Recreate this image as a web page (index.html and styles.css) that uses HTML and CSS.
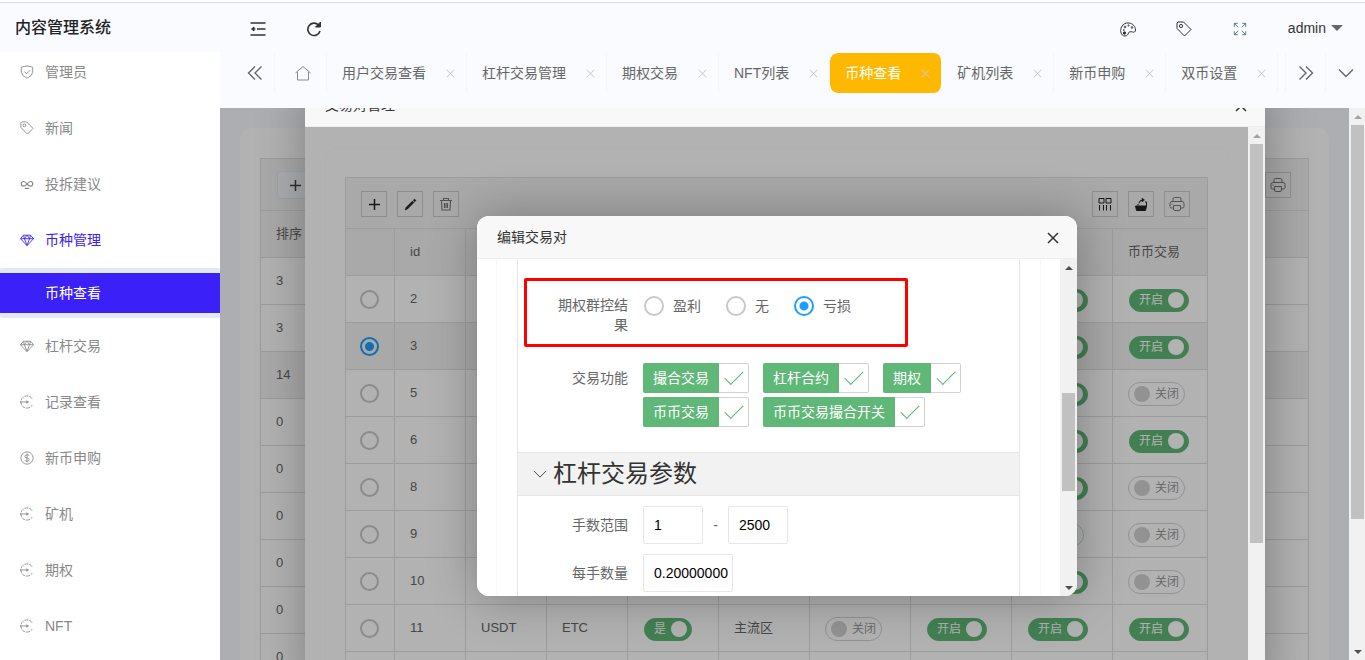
FILE: index.html
```html
<!DOCTYPE html>
<html lang="zh-CN">
<head>
<meta charset="utf-8">
<title>内容管理系统</title>
<link rel="stylesheet" href="styles.css">
</head>
<body>
<svg class="sprite" aria-hidden="true">
  <symbol id="i-gem" viewBox="0 0 16 16"><path d="M4 2.500h8l3.500 4L8 14.500.500 6.500zM.500 6.500h15M5 6.500 8 14l3-7.500M4 2.500l1 4 3-4 3 4 1-4"/></symbol>
  <symbol id="i-go" viewBox="0 0 16 16"><path d="M14 4.500A7 7 0 1 0 14 11.500" stroke-dasharray="4.500 1"/><path d="M0 8h8"/><path d="M7.500 6.500L10 8 7.500 9.500z" fill="currentColor" stroke-width=".5"/></symbol>
  <symbol id="i-tag" viewBox="0 0 16 16"><path d="M1 2l1-1h5.500l7.500 7.500-6.500 6.500L1 7.500z"/><circle cx="5" cy="5" r="1.600"/></symbol>
  <symbol id="i-plus" viewBox="0 0 16 16"><path d="M8.500 3v11M3 8.500h11" stroke-width="1.500"/></symbol>
  <symbol id="i-print" viewBox="0 0 16 16"><path d="M4 5V3q0-1.500 1.500-1.500h5q1.500 0 1.500 1.500v2M4 12H2.500Q1 12 1 10.500v-3Q1 5.500 3 5.500h10q2 0 2 2v3q0 1.500-1.500 1.500H12M4.500 9.500h7v3.500q0 1.500-1.500 1.500H6q-1.500 0-1.500-1.500zM2.500 8h1"/></symbol>
  <symbol id="i-x" viewBox="0 0 12 12"><path d="M1 1l10 10M11 1L1 11"/></symbol>
</svg>

<div class="app">
  <aside class="side">
    <h1 class="brand">内容管理系统</h1>
    <nav class="menu">
      <a href="#"><svg viewBox="0 0 16 16"><path d="M8 1l6.500 1.500v6Q14 12.500 8 15 2 12.500 1.500 8.500v-6zM5 7.500l2.500 2.500L11.500 6"/></svg>管理员</a>
      <a href="#"><svg><use href="#i-tag"/></svg>新闻</a>
      <a href="#"><svg viewBox="0 0 16 16"><path d="M8 8C6.500 6 5.500 5.200 4 5.200a2.600 2.600 0 0 0 0 5.200C6 10.400 7 9 8 8c1-1.500 2.300-2.800 4-2.800a2.600 2.600 0 0 1 0 5.200C10.500 10.400 9.500 9.500 8 8M5.500 13h5" stroke-width="1.300"/></svg>投拆建议</a>
      <a href="#" class="open"><svg><use href="#i-gem"/></svg>币种管理</a>
      <div class="submenu"><a href="#" aria-current="page">币种查看</a></div>
      <a href="#"><svg><use href="#i-gem"/></svg>杠杆交易</a>
      <a href="#"><svg><use href="#i-go"/></svg>记录查看</a>
      <a href="#"><svg viewBox="0 0 16 16"><circle cx="8" cy="8" r="7"/><path d="M10.500 5.500Q10 4.500 8 4.500 5.500 4.500 5.500 6.200 5.500 7.600 8 8q2.500.4 2.500 2T8 11.700Q6 11.700 5.500 10.500M8 3v10"/></svg>新币申购</a>
      <a href="#"><svg><use href="#i-go"/></svg>矿机</a>
      <a href="#"><svg><use href="#i-go"/></svg>期权</a>
      <a href="#"><svg><use href="#i-go"/></svg>NFT</a>
    </nav>
  </aside>

  <div class="main">
    <header class="topbar">
      <button aria-label="收起菜单"><svg viewBox="0 0 16 16" class="bold"><path d="M.500 2h15M7 8h8.500M.500 14h15"/><path d="M1.500 8L4 6v4zM4 8h1.500" fill="currentColor" stroke-width="1"/></svg></button>
      <button aria-label="刷新"><svg viewBox="0 0 16 16" class="bold"><path d="M12.500 4A6.200 6.200 0 1 0 14 10"/><path d="M14.500 1v5h-5z" fill="currentColor" stroke-width="1"/></svg></button>
      <span class="fill"></span>
      <button aria-label="主题"><svg viewBox="0 0 16 16"><path d="M3 14.500C.500 13 0 9 1.500 6 3 3 6 1.500 9 2c4 .500 6.500 3.500 6.500 7 0 2-1.500 2.500-3 2-2-.500-3.500-.500-4 1-.500 1.500-1.500 3-3.500 3-1 0-1.500 0-2-.500z"/><circle cx="5" cy="6" r=".8"/><circle cx="8.500" cy="4.500" r=".6"/><circle cx="12" cy="6.500" r=".8"/><circle cx="3.800" cy="9" r=".5"/><circle cx="4.500" cy="12" r="1.200" fill="currentColor"/></svg></button>
      <button aria-label="标签"><svg><use href="#i-tag"/></svg></button>
      <button aria-label="全屏" class="slate"><svg viewBox="0 0 16 16"><path d="M1.500 5.500v-4h4M1.500 1.500l4.500 4.500M10.500 1.500h4v4M14.500 1.500L10 6M1.500 10.500v4h4M1.500 14.500L6 10M14.500 10.500v4h-4M14.500 14.500L10 10"/></svg></button>
      <button class="user">admin<span class="caret"></span></button>
    </header>

    <nav class="tabs">
      <button class="edge" aria-label="向左"><svg viewBox="0 0 16 16"><path d="M8 1.500L1.500 8 8 14.500M14.500 1.500L8 8l6.500 6.500"/></svg></button>
      <a href="#" class="home" aria-label="首页"><svg viewBox="0 0 16 16"><path d="M.500 8L8 1.500 15.500 8M2.500 7v8h11V7"/></svg></a>
      <div class="tab"><a href="#">用户交易查看</a><button aria-label="关闭"><svg><use href="#i-x"/></svg></button></div>
      <div class="tab"><a href="#">杠杆交易管理</a><button aria-label="关闭"><svg><use href="#i-x"/></svg></button></div>
      <div class="tab"><a href="#">期权交易</a><button aria-label="关闭"><svg><use href="#i-x"/></svg></button></div>
      <div class="tab"><a href="#">NFT列表</a><button aria-label="关闭"><svg><use href="#i-x"/></svg></button></div>
      <div class="tab active"><a href="#">币种查看</a><button aria-label="关闭"><svg><use href="#i-x"/></svg></button></div>
      <div class="tab"><a href="#">矿机列表</a><button aria-label="关闭"><svg><use href="#i-x"/></svg></button></div>
      <div class="tab"><a href="#">新币申购</a><button aria-label="关闭"><svg><use href="#i-x"/></svg></button></div>
      <div class="tab"><a href="#">双币设置</a><button aria-label="关闭"><svg><use href="#i-x"/></svg></button></div>
      <span class="fill"></span>
      <button class="edge right" aria-label="向右"><svg viewBox="0 0 16 16"><path d="M1.500 1.500L8 8l-6.500 6.500M8 1.500L14.500 8 8 14.500"/></svg></button>
      <button class="edge right" aria-label="更多"><svg viewBox="0 0 16 16"><path d="M1 4.500l7 7 7-7"/></svg></button>
    </nav>

    <div class="frame">
      <main class="pane page">
        <section class="card">
          <div class="grid">
            <div class="tools tall">
              <button class="add" aria-label="添加"><svg><use href="#i-plus"/></svg></button>
              <span class="fill"></span>
              <button class="tool" aria-label="打印"><svg><use href="#i-print"/></svg></button>
            </div>
            <table>
              <thead><tr><th>排序</th></tr></thead>
              <tbody>
                <tr><td>3</td></tr>
                <tr><td>3</td></tr>
                <tr class="picked"><td>14</td></tr>
                <tr><td>0</td></tr>
                <tr><td>0</td></tr>
                <tr><td>0</td></tr>
                <tr><td>0</td></tr>
                <tr><td>0</td></tr>
                <tr><td>0</td></tr>
              </tbody>
            </table>
          </div>
        </section>
        <div class="shade"></div>

        <section class="dialog outer" aria-label="交易对管理">
          <header class="dialog-title">交易对管理<button aria-label="关闭"><svg><use href="#i-x"/></svg></button></header>
          <div class="frame">
            <div class="pane">
              <div class="card inset">
                <div class="grid">
                  <div class="tools">
                    <button class="tool dark" aria-label="添加"><svg><use href="#i-plus"/></svg></button>
                    <button class="tool dark" aria-label="编辑"><svg viewBox="0 0 16 16"><path d="M4 11.500l6.500-6.500 1.500 1.500L5.500 13l-2.500 1zM11.300 4.200l1.200-1.200 1.500 1.500-1.200 1.200z" fill="currentColor" stroke-width=".5"/></svg></button>
                    <button class="tool" aria-label="删除"><svg viewBox="0 0 16 16"><path d="M2 4.500h12M5.500 4V2.500h5V4M3.500 5l.500 9h8l.500-9M6.500 7v5M8 7v5M9.500 7v5" stroke-width="1.100"/></svg></button>
                    <span class="fill"></span>
                    <button class="tool dark" aria-label="筛选列"><svg viewBox="0 0 16 16"><path d="M2 2.500h5v4.500H2zM9 2.500h5v4.500H9zM2.500 9v5.500M6.500 9v5.500M9.500 9v5.500M13.500 9v5.500"/></svg></button>
                    <button class="tool dark" aria-label="导出"><svg viewBox="0 0 16 16"><path d="M2.500 10h11l-1 4.500h-9z" fill="currentColor"/><path d="M5 9.500V8M13.500 10V6H12M6 7.500q0-3.500 4-3.500"/><path d="M9 2L11.500 4 9 6z" fill="currentColor" stroke-width=".5"/></svg></button>
                    <button class="tool" aria-label="打印"><svg><use href="#i-print"/></svg></button>
                  </div>
                  <table class="pairs">
                    <colgroup><col class="w49"><col class="w71"><col class="w81"><col class="w81"><col class="w91"><col class="w91"><col class="w101"><col class="w101"><col class="w101"><col></colgroup>
                    <thead><tr><th></th><th>id</th><th></th><th></th><th></th><th></th><th></th><th></th><th></th><th>币币交易</th></tr></thead>
                    <tbody>
                      <tr><td class="pick"><input type="radio" name="pair" aria-label="2"></td><td>2</td><td></td><td></td><td></td><td></td><td></td><td></td><td><label class="switch"><input type="checkbox" checked>开启</label></td><td><label class="switch"><input type="checkbox" checked>开启</label></td></tr>
                      <tr class="picked"><td class="pick"><input type="radio" name="pair" aria-label="3" checked></td><td>3</td><td></td><td></td><td></td><td></td><td></td><td></td><td><label class="switch"><input type="checkbox" checked>开启</label></td><td><label class="switch"><input type="checkbox" checked>开启</label></td></tr>
                      <tr><td class="pick"><input type="radio" name="pair" aria-label="5"></td><td>5</td><td></td><td></td><td></td><td></td><td></td><td></td><td><label class="switch"><input type="checkbox" checked>开启</label></td><td><label class="switch"><input type="checkbox">关闭</label></td></tr>
                      <tr><td class="pick"><input type="radio" name="pair" aria-label="6"></td><td>6</td><td></td><td></td><td></td><td></td><td></td><td></td><td><label class="switch"><input type="checkbox" checked>开启</label></td><td><label class="switch"><input type="checkbox" checked>开启</label></td></tr>
                      <tr><td class="pick"><input type="radio" name="pair" aria-label="8"></td><td>8</td><td></td><td></td><td></td><td></td><td></td><td></td><td><label class="switch"><input type="checkbox" checked>开启</label></td><td><label class="switch"><input type="checkbox">关闭</label></td></tr>
                      <tr><td class="pick"><input type="radio" name="pair" aria-label="9"></td><td>9</td><td></td><td></td><td></td><td></td><td></td><td></td><td><label class="switch"><input type="checkbox">关闭</label></td><td><label class="switch"><input type="checkbox">关闭</label></td></tr>
                      <tr><td class="pick"><input type="radio" name="pair" aria-label="10"></td><td>10</td><td></td><td></td><td></td><td></td><td></td><td></td><td><label class="switch"><input type="checkbox" checked>开启</label></td><td><label class="switch"><input type="checkbox">关闭</label></td></tr>
                      <tr><td class="pick"><input type="radio" name="pair" aria-label="11"></td><td>11</td><td>USDT</td><td>ETC</td><td><label class="switch"><input type="checkbox" checked>是</label></td><td>主流区</td><td><label class="switch"><input type="checkbox">关闭</label></td><td><label class="switch"><input type="checkbox" checked>开启</label></td><td><label class="switch"><input type="checkbox" checked>开启</label></td><td><label class="switch"><input type="checkbox" checked>开启</label></td></tr>
                      <tr><td></td><td></td><td></td><td></td><td></td><td></td><td></td><td></td><td></td><td></td></tr>
                    </tbody>
                  </table>
                </div>
              </div>
              <div class="shade"></div>

              <section class="dialog editor" aria-label="编辑交易对">
                <header class="dialog-title">编辑交易对<button aria-label="关闭"><svg><use href="#i-x"/></svg></button></header>
                <div class="frame">
                  <div class="pane">
                    <form class="sheet">
                      <div class="panel">
                        <div class="body">
                          <div class="row" role="radiogroup" aria-labelledby="ctl">
                            <span class="label" id="ctl">期权群控结果</span>
                            <div class="radios">
                              <label><input type="radio" name="result">盈利</label>
                              <label><input type="radio" name="result">无</label>
                              <label><input type="radio" name="result" checked>亏损</label>
                            </div>
                            <div class="marker"></div>
                          </div>
                          <div class="row" role="group" aria-labelledby="fn">
                            <span class="label" id="fn">交易功能</span>
                            <div class="checks">
                              <label><span>撮合交易</span><input type="checkbox" checked></label>
                              <label><span>杠杆合约</span><input type="checkbox" checked></label>
                              <label><span>期权</span><input type="checkbox" checked></label>
                              <label><span>币币交易</span><input type="checkbox" checked></label>
                              <label><span>币币交易撮合开关</span><input type="checkbox" checked></label>
                            </div>
                          </div>
                        </div>
                        <h2><svg viewBox="0 0 16 16"><path d="M1 4.500l7 7 7-7"/></svg>杠杆交易参数</h2>
                        <div class="body fields">
                          <div class="row">
                            <label class="label" for="lot-min">手数范围</label>
                            <input type="text" id="lot-min" value="1"><span class="dash">-</span><input type="text" aria-label="最大手数" value="2500">
                          </div>
                          <div class="row">
                            <label class="label" for="lot-size">每手数量</label>
                            <input type="text" id="lot-size" class="wide" value="0.20000000">
                          </div>
                        </div>
                      </div>
                    </form>
                  </div>
                  <div class="bar"><i class="up"></i><div class="track"><div class="thumb thumb-editor"></div></div><i class="down"></i></div>
                </div>
              </section>
            </div>
            <div class="bar dim"><i class="up"></i><div class="track"><div class="thumb thumb-outer"></div></div><i class="down"></i></div>
          </div>
        </section>
      </main>
      <div class="bar slim dim"><i class="up"></i><div class="track"><div class="thumb thumb-page"></div></div><i class="down"></i></div>
    </div>
  </div>
</div>
</body>
</html>
```

FILE: styles.css
```css
* { box-sizing: border-box; }

body {
  margin: 0;
  height: 100vh;
  overflow: hidden;
  background: #fff;
  color: #666;
  font: 14px/20px "Liberation Sans", "Noto Sans CJK SC", sans-serif;
}

a { color: inherit; text-decoration: none; }

button, input { font: inherit; }

button {
  display: flex;
  align-items: center;
  justify-content: center;
  padding: 0;
  border: 0;
  background: none;
  color: inherit;
}

svg {
  width: 16px;
  height: 16px;
  flex: none;
  fill: none;
  stroke: currentColor;
  stroke-width: 1;
}

.sprite { display: none; }
.fill { flex: 1; }

.app {
  display: grid;
  grid-template-columns: 220px minmax(0, 1fr);
  height: calc(100vh - 2px);
  margin-top: 2px;
  border-top: 1px solid #d8dbe0;
}

/* sidebar */
.side { overflow: hidden; background: #fff; }

.brand {
  position: relative;
  margin: 0;
  padding: 0 15px;
  background: #f9fbff;
  color: #222;
  font-size: 16px;
  font-weight: 500;
  line-height: 49px;
}

.menu { margin-top: -8px; color: #888; }

.menu > a {
  display: flex;
  align-items: center;
  gap: 11px;
  height: 56px;
  padding-left: 20px;
}

.menu svg { width: 14px; height: 14px; }
.menu .open { color: #3b20f8; }

.submenu {
  padding: 5px 0;
  border-radius: 2px;
  background: #e4e8ef;
}

.submenu a {
  display: block;
  padding-left: 45px;
  background: #3b20f8;
  color: #fff;
  line-height: 40px;
}

/* header */
.main {
  display: flex;
  flex-direction: column;
  min-width: 0;
  min-height: 0;
  background: #f9fbff;
}

.topbar {
  display: flex;
  flex: none;
  height: 50px;
  padding: 0 22px 0 10px;
  color: #333;
}

.topbar button { width: 56px; }
.topbar svg { margin-top: 2px; }
.topbar .bold { stroke-width: 1.6; }
.topbar .slate { color: #4d6b80; }
.topbar .slate svg { width: 14px; height: 14px; }

.topbar .user {
  gap: 5px;
  width: auto;
  padding-left: 20px;
}

.caret {
  border: 6px solid transparent;
  border-top-color: #666;
  border-bottom-width: 0;
}

.tabs {
  display: flex;
  flex: none;
  height: 55px;
  padding: 0 0 15px 15px;
}

.edge { width: 40px; border-right: 1px solid #f4f5f7; }
.edge svg { stroke-width: 1.4; }
.edge.right { border-right: 0; border-left: 1px solid #f4f5f7; }

.home {
  display: flex;
  align-items: center;
  padding: 0 15px 0 20px;
  border-right: 1px solid #f4f5f7;
  color: #888;
}

.tab {
  display: flex;
  align-items: center;
  gap: 16px;
  padding: 0 7px 0 15px;
  border-right: 1px solid #f4f5f7;
  white-space: nowrap;
}

.tab button { width: 17px; height: 17px; color: #ccc; }
.tab svg { width: 9px; height: 9px; stroke-width: 1.4; }

.tab.active {
  border-right-color: transparent;
  border-radius: 8px;
  background: #ffb800 padding-box;
  color: #fff;
}

/* framed content with its own scrollbar */
.frame {
  display: flex;
  flex: 1;
  min-height: 0;
}

.pane {
  position: relative;
  flex: 1;
  min-width: 0;
  overflow: hidden;
  background: #fff;
}

.page { background: #f8f9ff; }

.shade {
  position: absolute;
  inset: 0;
  background: rgba(0, 0, 0, .3);
}

.bar {
  display: flex;
  flex: none;
  flex-direction: column;
  width: 17px;
  padding: 0 2px;
  background: #f1f1f1;
  color: #505050;
}

.bar.slim { width: 16px; padding-right: 1px; }

.bar i {
  display: flex;
  align-items: center;
  justify-content: center;
  height: 17px;
}

.bar i::before {
  content: "";
  border: 4px solid transparent;
}

.bar .up::before { border-top-width: 0; border-bottom-color: currentColor; }
.bar .down::before { border-bottom-width: 0; border-top-color: currentColor; }
.bar.dim .up { color: #a3a3a3; }
.track { flex: 1; }
.thumb { background: #c1c1c1; }
.thumb-page { height: 76%; }
.thumb-outer { height: 74%; }
.thumb-editor { flex: 1; height: 98px; }
.editor .track { display: flex; align-items: flex-end; padding-bottom: 88px; }

/* tables */
.card {
  margin: 20px 20px 0;
  padding: 30px 20px;
  border-radius: 12px;
  background: #fff;
}

.card.inset {
  border: 1px solid #fcfcfc;
  padding: 29px 19px;
}

.grid { border: 1px solid #e0e0e0; }

.tools {
  display: flex;
  align-items: center;
  gap: 10px;
  height: 51px;
  padding: 2px 17px 0 15px;
  border-bottom: 1px solid #e0e0e0;
  background: #f2f2f2;
}

.tools.tall {
  height: 52px;
  padding-top: 0;
  padding-left: 16px;
}

.tool {
  width: 26px;
  height: 26px;
  border: 1px solid #ccc;
  color: #777;
}

.tool.dark { color: #222; }

.add {
  width: 36px;
  height: 28px;
  border: 1px solid #e6eaee;
  border-radius: 4px;
  background: #f6f8fc;
  color: #444;
}

table {
  width: 100%;
  border-spacing: 0;
  table-layout: fixed;
  font-size: 13px;
}

th, td {
  height: 47px;
  padding: 0 15px;
  border: 0 solid #e0e0e0;
  border-width: 0 1px 1px 0;
  text-align: left;
  font-weight: 400;
  white-space: nowrap;
}

th:last-child, td:last-child { border-right: 0; }
thead, .picked { background: #f2f2f2; }
.w49 { width: 49px; }
.w71 { width: 71px; }
.w81 { width: 81px; }
.w91 { width: 91px; }
.w101 { width: 101px; }

.switch {
  display: inline-flex;
  align-items: center;
  gap: 5px;
  height: 24px;
  margin-top: 2px;
  padding: 0 5px;
  border: 1px solid #d2d2d2;
  border-radius: 12px;
  color: #999;
  font-size: 12px;
  vertical-align: middle;
}

.switch input {
  width: 16px;
  height: 16px;
  margin: 0;
  border-radius: 50%;
  background: #d2d2d2;
  appearance: none;
}

.switch:has(:checked) {
  flex-direction: row-reverse;
  height: 23px;
  margin-left: 1px;
  padding: 0 4px 0 9px;
  border-color: #5fb878;
  background: #5fb878;
  color: #fff;
}

.switch input:checked { background: #fff; }

input[type="radio"] {
  flex: none;
  width: 20px;
  height: 20px;
  margin: 0;
  border: 2px solid #c8c8c8;
  border-radius: 50%;
  appearance: none;
}

input[type="radio"]:checked {
  border-color: #1e9fff;
  background: radial-gradient(circle, #1e9fff 4px, transparent 5px);
}

td.pick { padding: 0 2px 0 0; text-align: center; }
.pick input[type="radio"] { width: 19px; height: 19px; vertical-align: middle; }

/* dialogs */
.dialog {
  position: absolute;
  display: flex;
  flex-direction: column;
  overflow: hidden;
  border-radius: 12px;
  background: #fff;
  box-shadow: 1px 1px 50px rgba(0, 0, 0, .3);
}

.outer { inset: -24px 84px -40px 85px; }

.editor {
  top: 89px;
  right: 171px;
  left: 172px;
  height: 380px;
}

.dialog-title {
  display: flex;
  flex: none;
  align-items: center;
  justify-content: space-between;
  height: 43px;
  padding: 0 18px 0 20px;
  border-bottom: 1px solid #eee;
  background: #f8f8f8;
  color: #333;
}

.dialog-title svg { width: 12px; height: 12px; margin-top: 2px; stroke-width: 1.5; }

/* form */
.sheet {
  margin: 0 19px;
  padding: 0 20px;
  border: 0 solid #f8f8f8;
  border-width: 0 1px;
}

.panel {
  border: 0 solid #e6e6e6;
  border-width: 0 1px;
}

.body {
  display: flex;
  flex-direction: column;
  gap: 15px;
  padding: 27px 15px 25px;
}

.body.fields { gap: 10px; padding-top: 10px; }

.row { position: relative; display: flex; align-items: flex-start; }

.label {
  width: 110px;
  flex: none;
  padding: 9px 15px;
  text-align: right;
}

.radios {
  display: flex;
  gap: 25px;
  padding: 10px 0 0 1px;
}

.radios label { display: flex; gap: 9px; }

/* red highlight drawn over the group */
.marker {
  position: absolute;
  inset: -8px auto -3px -9px;
  width: 384px;
  border: 3px solid #f00;
  border-radius: 2px;
}

.checks {
  display: flex;
  flex-wrap: wrap;
  gap: 4px 14px;
  padding-top: 4px;
}

.checks label {
  display: flex;
  height: 30px;
  border: 1px solid #d2d2d2;
  border-left: 0;
  border-radius: 2px;
}

.checks span {
  margin: -1px 0;
  padding: 0 10px;
  border-radius: 2px 0 0 2px;
  background: #5fb878;
  color: #fff;
  line-height: 30px;
}

.checks input {
  display: flex;
  align-items: center;
  justify-content: center;
  width: 29px;
  height: 28px;
  margin: 0;
  appearance: none;
}

.checks input:checked::before {
  content: "";
  width: 17px;
  height: 8px;
  margin-bottom: 5px;
  border: solid #5fb878;
  border-width: 0 0 1px 1px;
  transform: rotate(-45deg);
}

.panel h2 {
  display: flex;
  align-items: center;
  gap: 6px;
  height: 44px;
  margin: 0;
  padding-left: 15px;
  border: 0 solid #e6e6e6;
  border-width: 1px 0;
  background: #f2f2f2;
  color: #333;
  font-size: 24px;
  font-weight: 400;
}

.panel h2 svg { width: 14px; height: 14px; }

input[type="text"] {
  width: 60px;
  height: 38px;
  padding: 0 0 0 10px;
  border: 1px solid #e6e6e6;
  border-radius: 2px;
  background: #fff;
  color: #000;
}

input[type="text"].wide { width: 90px; }
.dash { width: 25px; line-height: 38px; text-align: center; }
```
